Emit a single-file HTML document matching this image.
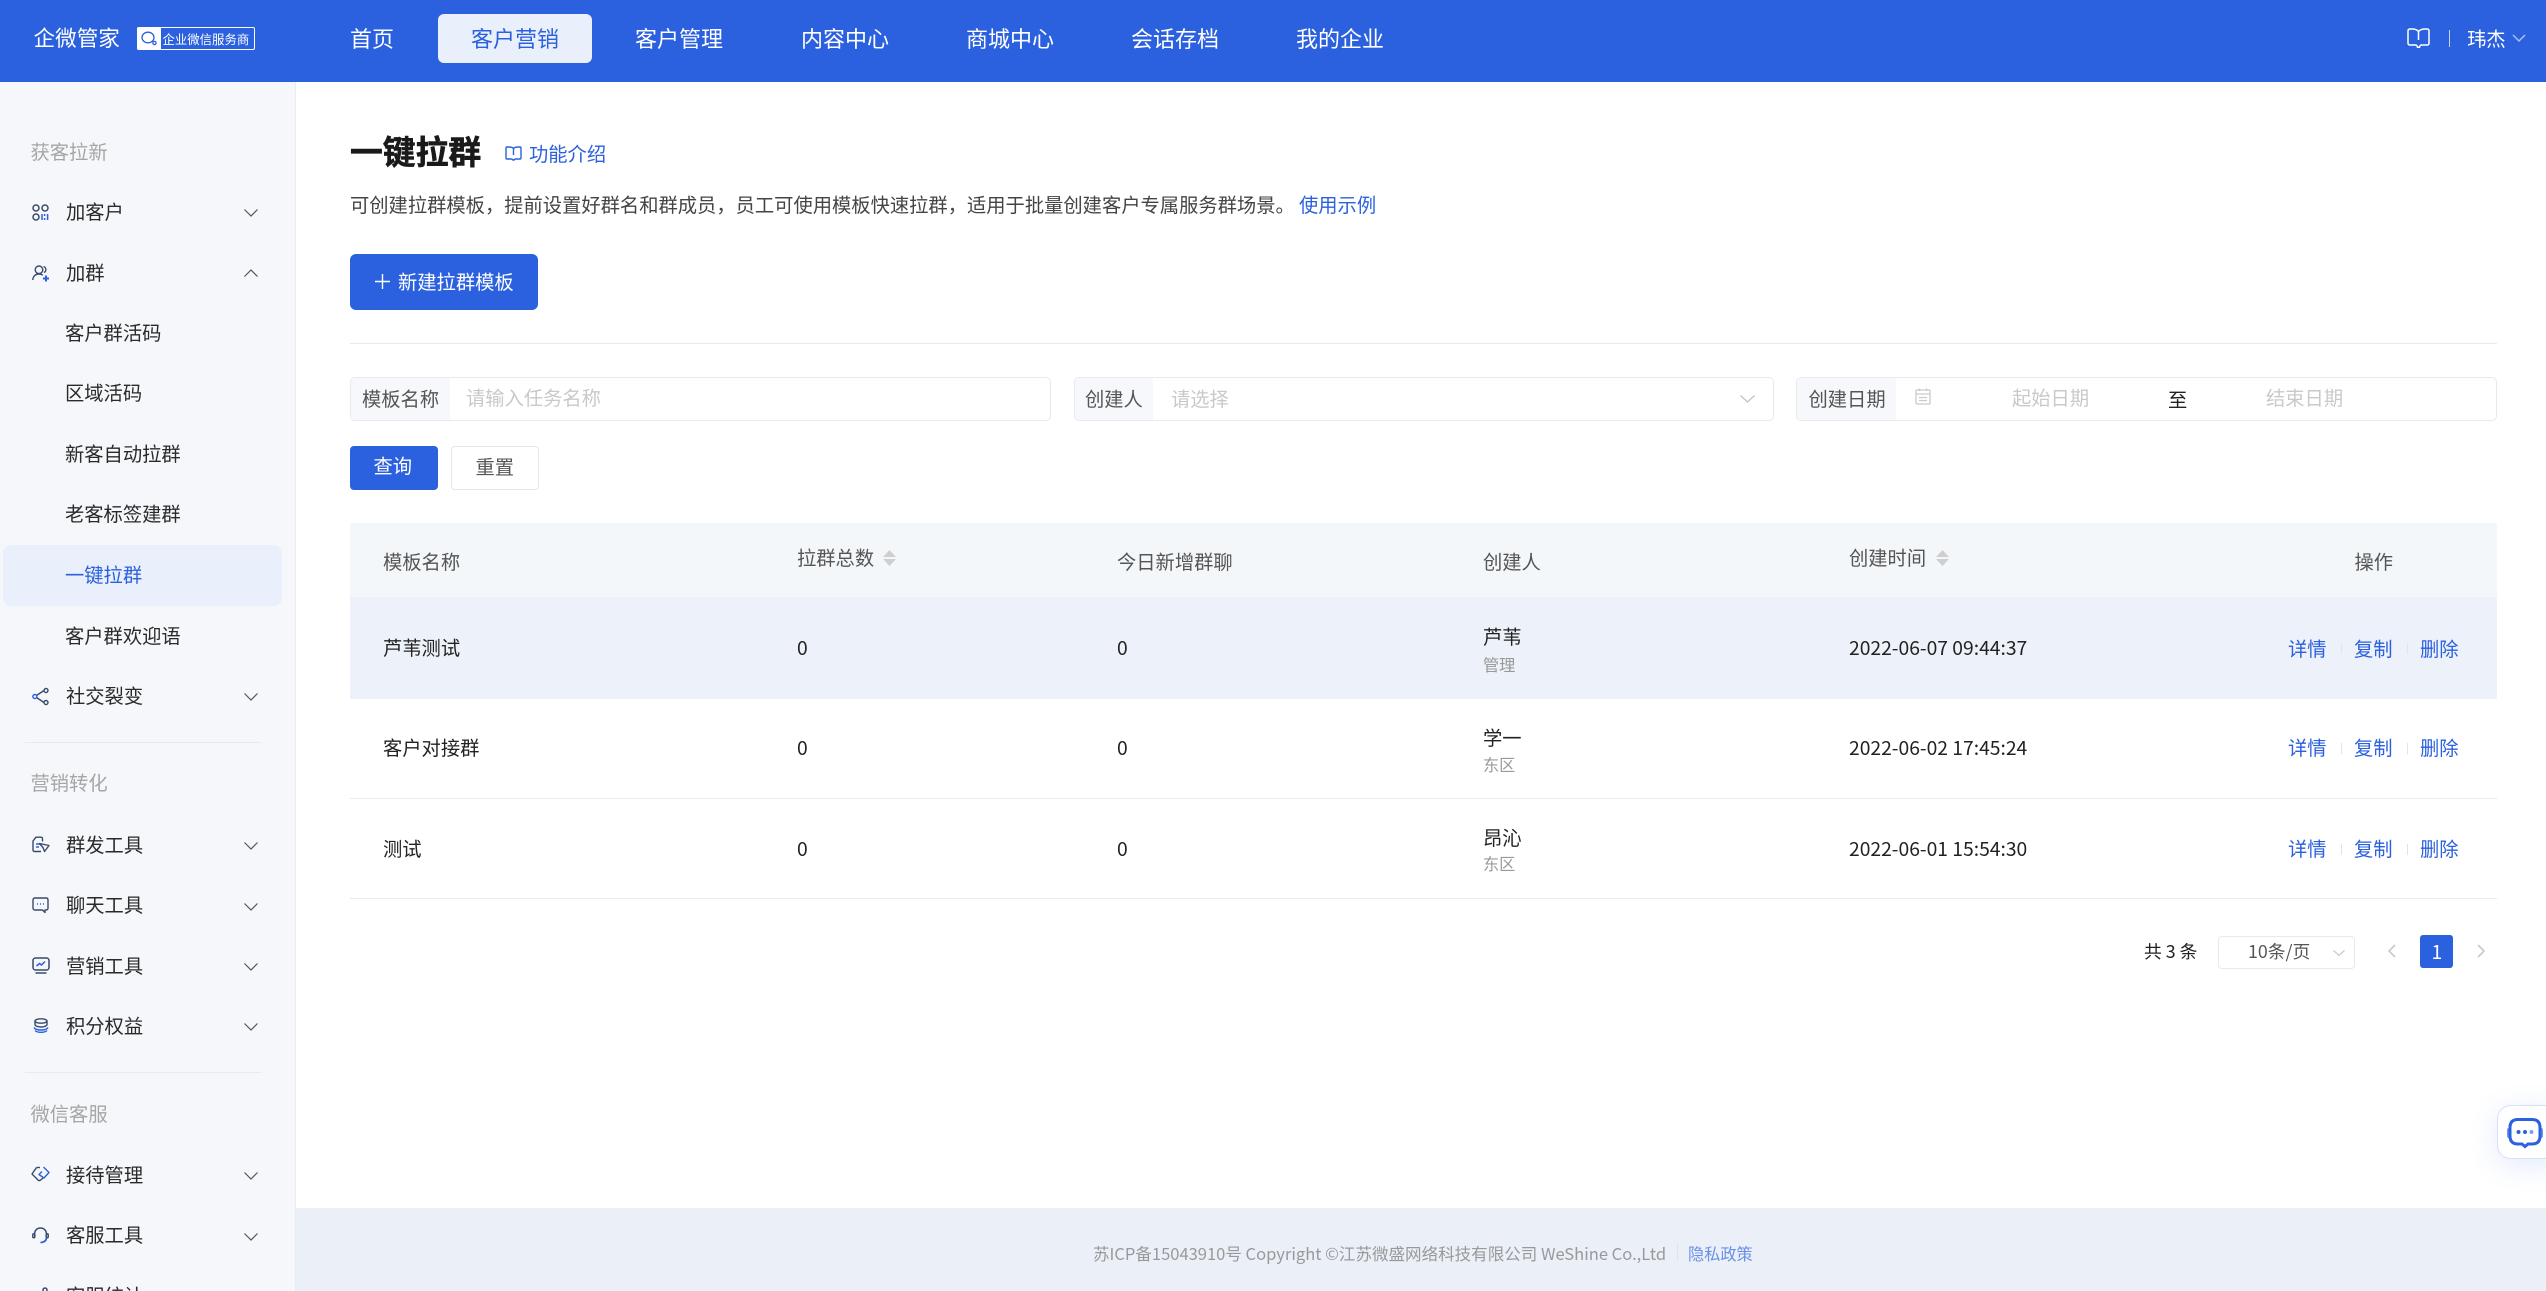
<!DOCTYPE html>
<html lang="zh-CN"><head><meta charset="utf-8"><title>一键拉群</title>
<style>
html,body{margin:0;padding:0;width:2546px;height:1291px;overflow:hidden;background:#fff}
body{position:relative;font-family:"Liberation Sans","Noto Sans CJK SC",sans-serif;font-size:19.3px;color:#222}
.c,.c *{font-family:"Noto Sans CJK SC",sans-serif}
.t{position:absolute;white-space:nowrap;line-height:30px;height:30px;transform:translateY(-50%)}
.b{position:absolute;box-sizing:border-box}
svg{position:absolute;overflow:visible}
.nav{font-size:22px;color:#fff;transform:translate(-50%,-50%)}
.g{color:#a6a6a6}
.i{color:#2a2a2a}
.l{color:#2b60de}
.h{color:#555}
.s{font-size:16.2px;color:#999}
.ph{color:#c9c9c9}
</style></head>
<body class="c">
<!-- top bar -->
<div class="b" style="left:0;top:0;width:2546px;height:82px;background:#2b60de"></div>
<span class="t" style="left:33.5px;top:38px;font-size:21.6px;color:#fff">企微管家</span>
<div class="b" style="left:137px;top:27px;width:118px;height:23px;border:1px solid #fff;border-radius:2px;background:#2b60de"></div>
<div class="b" style="left:137px;top:27px;width:24px;height:23px;background:#fff;border-radius:2px 0 0 2px"></div>
<svg style="left:141px;top:31px" width="17" height="15" viewBox="0 0 17 15" fill="none" stroke="#2b60de" stroke-width="1.3"><ellipse cx="7" cy="6.5" rx="6" ry="5.3"/><circle cx="13.5" cy="12" r="1.6"/></svg>
<span class="t" style="left:162.5px;top:38.5px;font-size:12.4px;color:#fff">企业微信服务商</span>

<span class="t nav" style="left:372px;top:38px">首页</span>
<div class="b" style="left:438px;top:14px;width:154px;height:49px;background:#e9effb;border-radius:6px"></div>
<span class="t nav" style="left:515px;top:38px;color:#2b60de">客户营销</span>
<span class="t nav" style="left:679px;top:38px">客户管理</span>
<span class="t nav" style="left:845px;top:38px">内容中心</span>
<span class="t nav" style="left:1010px;top:38px">商城中心</span>
<span class="t nav" style="left:1175px;top:38px">会话存档</span>
<span class="t nav" style="left:1340px;top:38px">我的企业</span>

<svg style="left:2407px;top:28px" width="23" height="21" viewBox="0 0 23 21" fill="none" stroke="#fff" stroke-width="1.5"><path d="M11.5 3.5C10 1.6 8 1 5 1H3Q1 1 1 3V15Q1 17 3 17H8.5Q10 17 10.5 19.2H12.5Q13 17 14.5 17H20Q22 17 22 15V3Q22 1 20 1H18C15 1 13 1.6 11.5 3.5ZM11.5 3.5V12"/></svg>
<div class="b" style="left:2449px;top:30px;width:1px;height:17px;background:#c5d4f6"></div>
<span class="t" style="left:2467px;top:38px;color:#fff">玮杰</span>
<svg style="left:2512px;top:34px" width="14" height="8" viewBox="0 0 14 8" fill="none" stroke="#a9c0f3" stroke-width="1.5"><path d="M1 1L7 7L13 1"/></svg>

<!-- sidebar -->
<div class="b" style="left:0;top:82px;width:296px;height:1209px;background:#f5f7fb;border-right:1px solid #e9ebf1"></div>
<span class="t g" style="left:30.5px;top:150.5px">获客拉新</span>

<svg style="left:32px;top:204px" width="17" height="17" viewBox="0 0 17 17" fill="none" stroke="#3b4a6b" stroke-width="1.5"><circle cx="4" cy="4" r="3"/><circle cx="13" cy="4" r="3"/><circle cx="4" cy="13" r="3"/><path d="M10 10V16" stroke="#2b60de"/><path d="M12.6 10V12M12.6 14V16" stroke="#2b60de"/><path d="M15.6 10V16" stroke="#2b60de"/></svg>
<span class="t i" style="left:66px;top:210.5px">加客户</span>
<svg style="left:244px;top:209px" width="14" height="8" viewBox="0 0 14 8" fill="none" stroke="#555" stroke-width="1.2"><path d="M.5 .5L7 7L13.5 .5"/></svg>

<svg style="left:32px;top:265px" width="18" height="17" viewBox="0 0 18 17" fill="none" stroke="#3b4a6b" stroke-width="1.4"><circle cx="7" cy="4.8" r="3.8"/><path d="M.8 15C1 11 3.6 9 7 9C8.5 9 9.8 9.4 10.8 10.2"/><path d="M11.5 1.5A3.2 3.2 0 0 1 12 7.5"/><path d="M14 10.5V16.5M11 13.5H17" stroke="#2b60de" stroke-width="2"/></svg>
<span class="t i" style="left:66px;top:271.5px">加群</span>
<svg style="left:244px;top:269px" width="14" height="8" viewBox="0 0 14 8" fill="none" stroke="#555" stroke-width="1.2"><path d="M.5 7.5L7 1L13.5 7.5"/></svg>

<span class="t i" style="left:65px;top:331.5px">客户群活码</span>
<span class="t i" style="left:65px;top:392px">区域活码</span>
<span class="t i" style="left:65px;top:452.5px">新客自动拉群</span>
<span class="t i" style="left:65px;top:513px">老客标签建群</span>
<div class="b" style="left:3px;top:545px;width:279px;height:61px;background:#e9effb;border-radius:8px"></div>
<span class="t l" style="left:65px;top:573.5px">一键拉群</span>
<span class="t i" style="left:65px;top:634.5px">客户群欢迎语</span>

<svg style="left:32px;top:688px" width="17" height="17" viewBox="0 0 17 17" fill="none" stroke="#3b4a6b" stroke-width="1.4"><path d="M4.5 7.5L12 2.5M4.5 9.5L12 14.5"/><circle cx="2.8" cy="8.5" r="2" stroke="#2b60de"/><circle cx="14" cy="2.5" r="2"/><circle cx="14" cy="14.5" r="2"/></svg>
<span class="t i" style="left:66px;top:694.5px">社交裂变</span>
<svg style="left:244px;top:693px" width="14" height="8" viewBox="0 0 14 8" fill="none" stroke="#555" stroke-width="1.2"><path d="M.5 .5L7 7L13.5 .5"/></svg>

<div class="b" style="left:25px;top:742px;width:236px;height:1px;background:#e8eaef"></div>
<span class="t g" style="left:30.5px;top:782px">营销转化</span>

<svg style="left:32px;top:836px" width="18" height="17" viewBox="0 0 18 17" fill="none" stroke="#3b4a6b" stroke-width="1.4"><path d="M9 15.5H2.5Q1 15.5 1 14V5L4 1.2H9Q10.5 1.2 10.5 2.8V5.5"/><path d="M4 8H8M4 11H7" stroke="#2b60de"/><path d="M7.5 7.5L17 9.5L12.5 15.5L11 11.5Z" stroke-linejoin="round"/></svg>
<span class="t i" style="left:66px;top:843.5px">群发工具</span>
<svg style="left:244px;top:842px" width="14" height="8" viewBox="0 0 14 8" fill="none" stroke="#555" stroke-width="1.2"><path d="M.5 .5L7 7L13.5 .5"/></svg>

<svg style="left:32px;top:897px" width="17" height="16" viewBox="0 0 17 16" fill="none" stroke="#3b4a6b" stroke-width="1.4"><path d="M3 1H14Q16 1 16 3V11Q16 13 14 13H13V15.5L10.5 13H3Q1 13 1 11V3Q1 1 3 1Z" stroke-linejoin="round"/><path d="M5 7H6M8 7H9M11 7H12" stroke="#2b60de" stroke-width="1.5"/></svg>
<span class="t i" style="left:66px;top:904px">聊天工具</span>
<svg style="left:244px;top:903px" width="14" height="8" viewBox="0 0 14 8" fill="none" stroke="#555" stroke-width="1.2"><path d="M.5 .5L7 7L13.5 .5"/></svg>

<svg style="left:32px;top:957px" width="18" height="17" viewBox="0 0 18 17" fill="none" stroke="#3b4a6b" stroke-width="1.5"><rect x="1" y="1" width="16" height="12" rx="2.5"/><path d="M3.5 16H14.5"/><path d="M4.5 9L7.5 6.5L9.5 8L13 4.5" stroke="#2b60de"/></svg>
<span class="t i" style="left:66px;top:964.5px">营销工具</span>
<svg style="left:244px;top:963px" width="14" height="8" viewBox="0 0 14 8" fill="none" stroke="#555" stroke-width="1.2"><path d="M.5 .5L7 7L13.5 .5"/></svg>

<svg style="left:33px;top:1018px" width="16" height="15" viewBox="0 0 16 15" fill="none" stroke="#3b4a6b" stroke-width="1.4"><ellipse cx="8" cy="3" rx="6" ry="2.2"/><path d="M2 3V6.5C2 8 5 9 8 9S14 8 14 6.5V3"/><path d="M1 9.5C2 11.5 5 12 8 12S14 11.5 15 9.5" stroke="#2b60de"/><path d="M2 12.5C3 13.8 5 14.3 8 14.3S13 13.8 14 12.5" stroke="#2b60de"/></svg>
<span class="t i" style="left:66px;top:1025px">积分权益</span>
<svg style="left:244px;top:1023px" width="14" height="8" viewBox="0 0 14 8" fill="none" stroke="#555" stroke-width="1.2"><path d="M.5 .5L7 7L13.5 .5"/></svg>

<div class="b" style="left:25px;top:1072px;width:236px;height:1px;background:#e8eaef"></div>
<span class="t g" style="left:30.5px;top:1112.5px">微信客服</span>

<svg style="left:31px;top:1166px" width="19" height="16" viewBox="0 0 19 16" fill="none" stroke="#3b4a6b" stroke-width="1.4"><path d="M5.5 1.5L1 8L7.5 14.5H9L12 12" stroke-linejoin="round"/><path d="M5.5 1.5H9" /><path d="M12.5 1L18 6.5L13 12L8 8.5L11 5.5" stroke="#2b60de" stroke-linejoin="round"/></svg>
<span class="t i" style="left:66px;top:1173.5px">接待管理</span>
<svg style="left:244px;top:1172px" width="14" height="8" viewBox="0 0 14 8" fill="none" stroke="#555" stroke-width="1.2"><path d="M.5 .5L7 7L13.5 .5"/></svg>

<svg style="left:32px;top:1227px" width="17" height="17" viewBox="0 0 17 17" fill="none" stroke="#3b4a6b" stroke-width="1.5"><path d="M2.5 7.5C2.5 3.5 5 1 8.5 1S14.5 3.5 14.5 7.5"/><rect x=".8" y="6.8" width="2" height="4" rx="1"/><rect x="14.2" y="6.8" width="2" height="4" rx="1"/><path d="M14.5 11C14 14 12 15.5 8.5 15.5" stroke="#2b60de" stroke-width="1.8"/></svg>
<span class="t i" style="left:66px;top:1234px">客服工具</span>
<svg style="left:244px;top:1233px" width="14" height="8" viewBox="0 0 14 8" fill="none" stroke="#555" stroke-width="1.2"><path d="M.5 .5L7 7L13.5 .5"/></svg>

<svg style="left:32px;top:1287px" width="17" height="17" viewBox="0 0 17 17" fill="none" stroke="#3b4a6b" stroke-width="1.5"><circle cx="13" cy="3" r="2"/><path d="M3 14L8 8L11 11"/></svg>
<span class="t i" style="left:66px;top:1294.5px">客服统计</span>

<!-- head -->
<span class="t" style="left:350px;top:151px;font-size:32.8px;font-weight:700;-webkit-text-stroke:.6px #1a1a1a;color:#1a1a1a;height:44px;line-height:44px">一键拉群</span>
<svg style="left:505px;top:146px" width="17" height="15" viewBox="0 0 17 15" fill="none" stroke="#2b60de" stroke-width="1.4"><path d="M8.5 2.5C7.5 1.2 6 1 4 1H2Q1 1 1 2V12Q1 13 2 13H6Q7.5 13 8 14H9Q9.5 13 11 13H15Q16 13 16 12V2Q16 1 15 1H13C11 1 9.5 1.2 8.5 2.5ZM8.5 2.5V9"/></svg>
<span class="t l" style="left:529px;top:152.5px">功能介绍</span>
<span class="t" style="left:350px;top:204px;color:#444">可创建拉群模板，提前设置好群名和群成员，员工可使用模板快速拉群，适用于批量创建客户专属服务群场景。</span>
<span class="t l" style="left:1299px;top:204px">使用示例</span>

<div class="b" style="left:350px;top:254px;width:188px;height:56px;background:#2b60de;border-radius:6px"></div>
<svg style="left:375px;top:274px" width="15" height="15" viewBox="0 0 15 15" stroke="#fff" stroke-width="1.4"><path d="M7.5 0V15M0 7.5H15"/></svg>
<span class="t" style="left:398px;top:280.5px;color:#fff">新建拉群模板</span>

<div class="b" style="left:350px;top:343px;width:2147px;height:1px;background:#e8eaee"></div>

<!-- filters -->
<div class="b" style="left:350px;top:377px;width:701px;height:44px;border:1px solid #e8e9ef;border-radius:5px"></div>
<div class="b" style="left:351px;top:378px;width:99px;height:42px;background:#f7f8fc;border-radius:5px 0 0 5px"></div>
<span class="t h" style="left:362px;top:397.5px">模板名称</span>
<span class="t ph" style="left:466px;top:397px">请输入任务名称</span>

<div class="b" style="left:1074px;top:377px;width:700px;height:44px;border:1px solid #e8e9ef;border-radius:5px"></div>
<div class="b" style="left:1075px;top:378px;width:78px;height:42px;background:#f7f8fc;border-radius:5px 0 0 5px"></div>
<span class="t h" style="left:1085px;top:398px">创建人</span>
<span class="t ph" style="left:1171px;top:398px">请选择</span>
<svg style="left:1740px;top:395px" width="15" height="8" viewBox="0 0 15 8" fill="none" stroke="#c4c4c4" stroke-width="1.3"><path d="M.5 .5L7.5 7L14.5 .5"/></svg>

<div class="b" style="left:1796px;top:377px;width:701px;height:44px;border:1px solid #e8e9ef;border-radius:5px"></div>
<div class="b" style="left:1797px;top:378px;width:99px;height:42px;background:#f7f8fc;border-radius:5px 0 0 5px"></div>
<span class="t h" style="left:1808.5px;top:398px">创建日期</span>
<svg style="left:1915px;top:388px" width="16" height="17" viewBox="0 0 16 17" fill="none" stroke="#c9c9c9" stroke-width="1.3"><rect x="1" y="2" width="14" height="14" rx="1"/><path d="M1 6H15M4 9.5H12M4 12.5H12M4.5 .5V3M11.5 .5V3"/></svg>
<span class="t ph" style="left:2012px;top:397px">起始日期</span>
<span class="t" style="left:2168px;top:399px;color:#222">至</span>
<span class="t ph" style="left:2266px;top:397px">结束日期</span>

<div class="b" style="left:350px;top:446px;width:88px;height:44px;background:#2b60de;border-radius:4px"></div>
<span class="t" style="left:373.5px;top:465px;color:#fff">查询</span>
<div class="b" style="left:451px;top:446px;width:88px;height:44px;border:1px solid #e6e7ec;border-radius:4px;background:#fff"></div>
<span class="t h" style="left:475.5px;top:465.5px">重置</span>

<!-- table -->
<div class="b" style="left:350px;top:523px;width:2147px;height:74px;background:#f4f7fa"></div>
<div class="b" style="left:350px;top:597px;width:2147px;height:102px;background:#edf1f9"></div>
<div class="b" style="left:350px;top:798px;width:2147px;height:1px;background:#e9ebf1"></div>
<div class="b" style="left:350px;top:898px;width:2147px;height:1px;background:#e9ebf1"></div>

<span class="t h" style="left:383px;top:560.5px">模板名称</span>
<span class="t h" style="left:797px;top:557px">拉群总数</span>
<svg style="left:883px;top:550px" width="13" height="16" viewBox="0 0 13 16" fill="#cfcfcf"><path d="M6.5 0L13 7H0Z"/><path d="M0 9H13L6.5 16Z"/></svg>
<span class="t h" style="left:1117px;top:560.5px">今日新增群聊</span>
<span class="t h" style="left:1483px;top:560.5px">创建人</span>
<span class="t h" style="left:1849px;top:557px">创建时间</span>
<svg style="left:1936px;top:550px" width="13" height="16" viewBox="0 0 13 16" fill="#cfcfcf"><path d="M6.5 0L13 7H0Z"/><path d="M0 9H13L6.5 16Z"/></svg>
<span class="t h" style="left:2354.5px;top:560.5px">操作</span>

<span class="t" style="left:383px;top:647px">芦苇测试</span>
<span class="t" style="left:797px;top:647px">0</span>
<span class="t" style="left:1117px;top:647px">0</span>
<span class="t" style="left:1483px;top:636px">芦苇</span>
<span class="t s" style="left:1483px;top:664px">管理</span>
<span class="t" style="left:1849px;top:647px">2022-06-07 09:44:37</span>
<span class="t l" style="left:2288px;top:647.5px">详情</span><span class="b" style="left:2341px;top:643px;width:1px;height:11px;background:#e0e4ec"></span>
<span class="t l" style="left:2354px;top:647.5px">复制</span><span class="b" style="left:2407px;top:643px;width:1px;height:11px;background:#e0e4ec"></span>
<span class="t l" style="left:2420px;top:647.5px">删除</span>

<span class="t" style="left:383px;top:747px">客户对接群</span>
<span class="t" style="left:797px;top:747px">0</span>
<span class="t" style="left:1117px;top:747px">0</span>
<span class="t" style="left:1483px;top:736.5px">学一</span>
<span class="t s" style="left:1483px;top:764px">东区</span>
<span class="t" style="left:1849px;top:747px">2022-06-02 17:45:24</span>
<span class="t l" style="left:2288px;top:747px">详情</span><span class="b" style="left:2341px;top:743px;width:1px;height:11px;background:#dfe3ea"></span>
<span class="t l" style="left:2354px;top:747px">复制</span><span class="b" style="left:2407px;top:743px;width:1px;height:11px;background:#dfe3ea"></span>
<span class="t l" style="left:2420px;top:747px">删除</span>

<span class="t" style="left:383px;top:848px">测试</span>
<span class="t" style="left:797px;top:848px">0</span>
<span class="t" style="left:1117px;top:848px">0</span>
<span class="t" style="left:1483px;top:837px">昂沁</span>
<span class="t s" style="left:1483px;top:863px">东区</span>
<span class="t" style="left:1849px;top:848px">2022-06-01 15:54:30</span>
<span class="t l" style="left:2288px;top:848px">详情</span><span class="b" style="left:2341px;top:844px;width:1px;height:11px;background:#dfe3ea"></span>
<span class="t l" style="left:2354px;top:848px">复制</span><span class="b" style="left:2407px;top:844px;width:1px;height:11px;background:#dfe3ea"></span>
<span class="t l" style="left:2420px;top:848px">删除</span>

<!-- pagination -->
<span class="t" style="left:2144px;top:950.5px;font-size:17.8px">共 3 条</span>
<div class="b" style="left:2218px;top:936px;width:137px;height:33px;border:1px solid #e8e9ef;border-radius:4px"></div>
<span class="t" style="left:2248px;top:951px;font-size:17.8px;color:#555">10条/页</span>
<svg style="left:2333px;top:950px" width="12" height="6" viewBox="0 0 12 6" fill="none" stroke="#c9c9c9" stroke-width="1.2"><path d="M.5 .5L6 5.5L11.5 .5"/></svg>
<svg style="left:2388px;top:944px" width="8" height="14" viewBox="0 0 8 14" fill="none" stroke="#c9c9c9" stroke-width="1.6"><path d="M7 1L1 7L7 13"/></svg>
<div class="b" style="left:2420px;top:935px;width:33px;height:33px;background:#2b60de;border-radius:3px"></div>
<span class="t" style="left:2431.5px;top:951px;color:#fff">1</span>
<svg style="left:2477px;top:944px" width="8" height="14" viewBox="0 0 8 14" fill="none" stroke="#c9c9c9" stroke-width="1.6"><path d="M1 1L7 7L1 13"/></svg>

<!-- footer -->
<div class="b" style="left:296px;top:1208px;width:2250px;height:83px;background:#ebf0f8"></div>
<span class="t" style="left:1093px;top:1252.5px;font-size:16.55px;color:#999">苏ICP备15043910号 Copyright ©江苏微盛网络科技有限公司 WeShine Co.,Ltd</span>
<div class="b" style="left:1677px;top:1244px;width:1px;height:16px;background:#dfe3ea"></div>
<span class="t" style="left:1688px;top:1252.5px;font-size:16.2px;color:#6b8fe8">隐私政策</span>

<!-- float -->
<div class="b" style="left:2497px;top:1105px;width:70px;height:54px;background:#fff;border:1px solid #d6e2f8;border-radius:14px;box-shadow:0 6px 30px rgba(43,96,222,.13)"></div>
<svg style="left:2507px;top:1118px" width="36" height="30" viewBox="0 0 36 30"><rect x="0" y="10" width="4" height="10" rx="2" fill="#6f95ec"/><rect x="32" y="10" width="4" height="10" rx="2" fill="#6f95ec"/><path d="M11 1.5H25Q33 1.5 33 9.5V18Q33 26 25 26H21L18 28.5L15 26H11Q3 26 3 18V9.5Q3 1.5 11 1.5Z" fill="#fff" stroke="#2b60de" stroke-width="3"/><circle cx="11.5" cy="14" r="2" fill="#2b60de"/><circle cx="18" cy="14" r="2" fill="#2b60de"/><circle cx="24.5" cy="14" r="2" fill="#7f9fee"/></svg>
</body></html>
